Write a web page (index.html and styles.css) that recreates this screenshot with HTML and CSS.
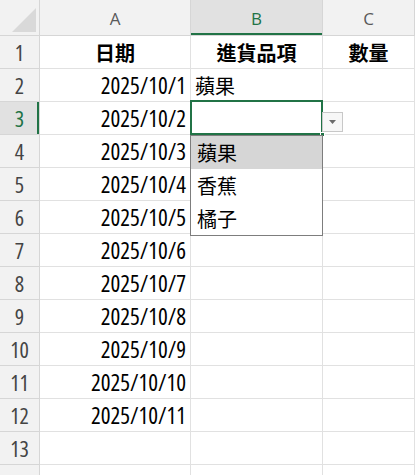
FILE: index.html
```html
<!DOCTYPE html>
<html lang="zh-Hant">
<head>
<meta charset="utf-8">
<title>Sheet</title>
<link rel="stylesheet" href="styles.css">
</head>
<body>
<div class="sheet">
  <div class="corner"><span class="tri"></span></div>
  <div class="colhead">A</div>
  <div class="colhead sel">B</div>
  <div class="colhead">C</div>

  <div class="rowhead">1</div>
  <div class="cell title">日期</div>
  <div class="cell title">進貨品項</div>
  <div class="cell title">數量</div>

  <div class="rowhead">2</div>
  <div class="cell num">2025/10/1</div>
  <div class="cell txt">蘋果</div>
  <div class="cell"></div>

  <div class="rowhead sel">3</div>
  <div class="cell num">2025/10/2</div>
  <div class="cell"></div>
  <div class="cell"></div>

  <div class="rowhead">4</div>
  <div class="cell num">2025/10/3</div>
  <div class="cell"></div>
  <div class="cell"></div>

  <div class="rowhead">5</div>
  <div class="cell num">2025/10/4</div>
  <div class="cell"></div>
  <div class="cell"></div>

  <div class="rowhead">6</div>
  <div class="cell num">2025/10/5</div>
  <div class="cell"></div>
  <div class="cell"></div>

  <div class="rowhead">7</div>
  <div class="cell num">2025/10/6</div>
  <div class="cell"></div>
  <div class="cell"></div>

  <div class="rowhead">8</div>
  <div class="cell num">2025/10/7</div>
  <div class="cell"></div>
  <div class="cell"></div>

  <div class="rowhead">9</div>
  <div class="cell num">2025/10/8</div>
  <div class="cell"></div>
  <div class="cell"></div>

  <div class="rowhead">10</div>
  <div class="cell num">2025/10/9</div>
  <div class="cell"></div>
  <div class="cell"></div>

  <div class="rowhead">11</div>
  <div class="cell num">2025/10/10</div>
  <div class="cell"></div>
  <div class="cell"></div>

  <div class="rowhead">12</div>
  <div class="cell num">2025/10/11</div>
  <div class="cell"></div>
  <div class="cell"></div>

  <div class="rowhead">13</div>
  <div class="cell"></div>
  <div class="cell"></div>
  <div class="cell"></div>

  <div class="rowhead last">14</div>
  <div class="cell"></div>
  <div class="cell"></div>
  <div class="cell"></div>

  <div class="selection"><span class="handle"></span></div>
  <div class="ddbtn"><svg width="7" height="4" viewBox="0 0 7 4"><path d="M0 0H7L3.5 4Z" fill="#6b6b6b"/></svg></div>
  <ul class="ddlist">
    <li class="item hl">蘋果</li>
    <li class="item">香蕉</li>
    <li class="item">橘子</li>
  </ul>
</div>
</body>
</html>
```

FILE: styles.css
```css
html, body {
  margin: 0;
  padding: 0;
  background: #ffffff;
}

.sheet {
  position: relative;
  width: 415px;
  height: 475px;
  overflow: hidden;
  display: grid;
  grid-template-columns: 40px 151px 132px 92px;
  grid-template-rows: 36px repeat(14, 33px);
  font-family: "Open Sans", "Liberation Sans", sans-serif;
  font-stretch: 75%;
  color: #000;
}

.sheet > div {
  box-sizing: border-box;
}

.corner {
  position: relative;
  background: #f2f2f2;
  border-right: 1px solid #d6d6d6;
  border-bottom: 1px solid #d6d6d6;
}

.tri {
  position: absolute;
  right: 3px;
  bottom: 3px;
  width: 0;
  height: 0;
  border-left: 24px solid transparent;
  border-bottom: 24px solid #d9d9d9;
}

.colhead {
  background: #f2f2f2;
  border-right: 1px solid #d6d6d6;
  border-bottom: 1px solid #d6d6d6;
  display: flex;
  align-items: center;
  justify-content: center;
  font-size: 17px;
  color: #5a5a5a;
  padding-top: 2px;
  font-stretch: 100%;
}

.colhead.sel {
  background: #e1e1e1;
  color: #217346;
  box-shadow: inset 0 -2px 0 #217346;
}

.rowhead {
  background: #f2f2f2;
  border-right: 1px solid #d6d6d6;
  border-bottom: 1px solid #d6d6d6;
  display: flex;
  align-items: center;
  justify-content: center;
  font-size: 22px;
  color: #444;
}

.rowhead.last {
  align-items: flex-start;
  padding-top: 8px;
}

.rowhead.sel {
  background: #e1e1e1;
  color: #217346;
  box-shadow: inset -2px 0 0 #217346;
}

.cell {
  border-right: 1px solid #e1e1e1;
  border-bottom: 1px solid #e1e1e1;
  display: flex;
  align-items: center;
  white-space: nowrap;
}

.num {
  justify-content: flex-end;
  padding-right: 4px;
  font-size: 23px;
}

.title {
  justify-content: center;
  font-family: "Noto Sans CJK TC", sans-serif;
  font-weight: 700;
  font-size: 20px;
}

.txt {
  padding-left: 4px;
  font-family: "Noto Sans CJK TC", sans-serif;
  font-size: 20px;
}

.selection {
  position: absolute;
  left: 190px;
  top: 100px;
  width: 133px;
  height: 35px;
  box-sizing: border-box;
  border: 2px solid #217346;
}

.handle {
  position: absolute;
  right: -4px;
  bottom: -4px;
  width: 5px;
  height: 5px;
  background: #217346;
  border: 1px solid #fff;
  box-sizing: border-box;
}

.ddbtn {
  position: absolute;
  left: 322px;
  top: 112px;
  width: 21px;
  height: 20px;
  box-sizing: border-box;
  border: 1px solid #c8c8c8;
  background: #f7f7f7;
  display: flex;
  align-items: center;
  justify-content: center;
}

.ddlist {
  position: absolute;
  left: 190px;
  top: 135px;
  width: 133px;
  margin: 0;
  padding: 0;
  list-style: none;
  box-sizing: border-box;
  border: 1px solid #7d7d7d;
  background: #fff;
  font-family: "Noto Sans CJK TC", sans-serif;
  font-size: 20px;
}

.item {
  height: 33px;
  display: flex;
  align-items: center;
  padding-left: 6px;
}

.item.hl {
  background: #d6d6d6;
}
```
